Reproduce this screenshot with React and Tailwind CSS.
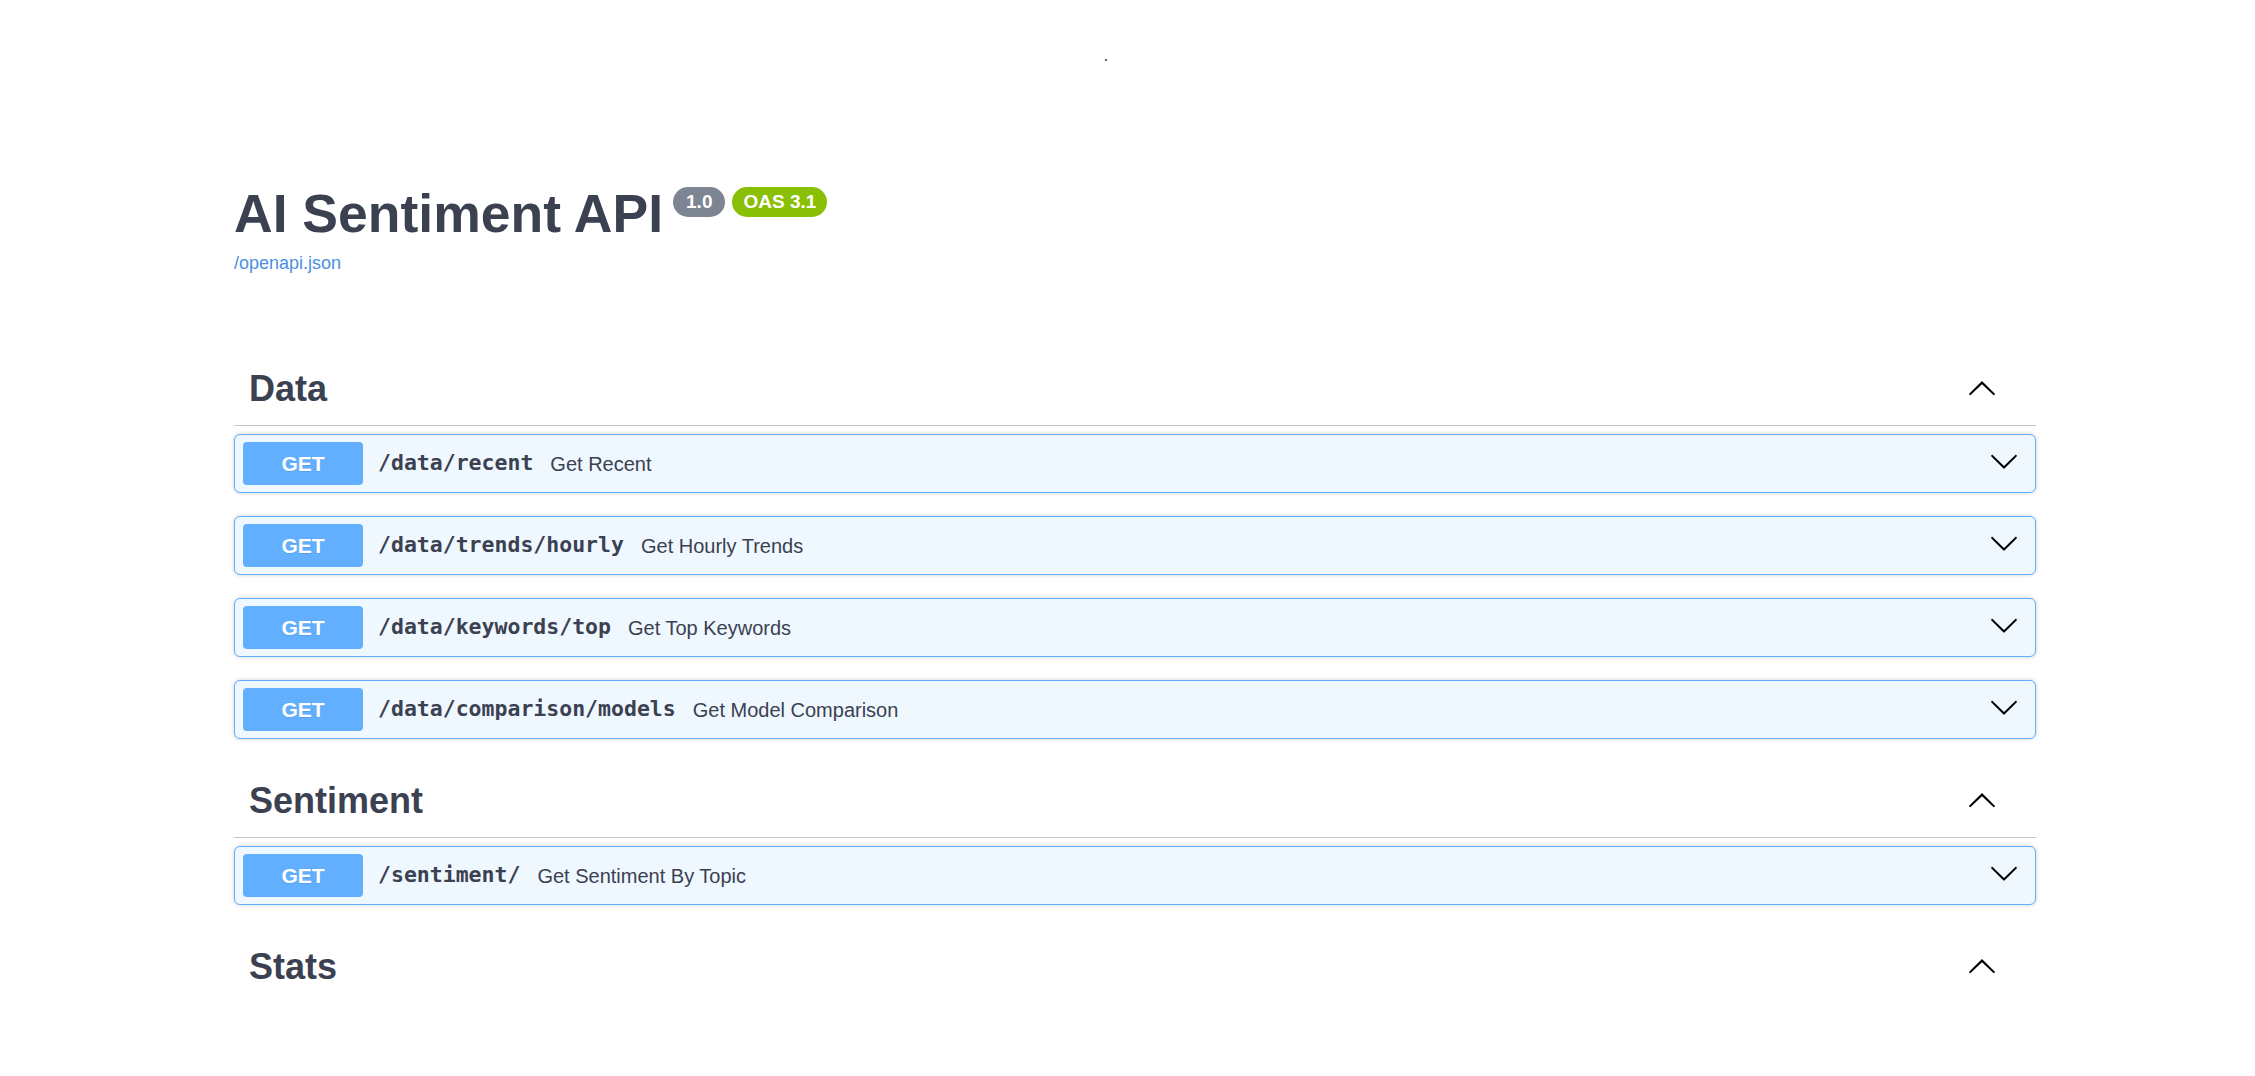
const sections = [
  {
    name: "Data",
    ops: [
      { path: "/data/recent", summary: "Get Recent" },
      { path: "/data/trends/hourly", summary: "Get Hourly Trends" },
      { path: "/data/keywords/top", summary: "Get Top Keywords" },
      { path: "/data/comparison/models", summary: "Get Model Comparison" },
    ],
  },
  {
    name: "Sentiment",
    ops: [{ path: "/sentiment/", summary: "Get Sentiment By Topic" }],
  },
  { name: "Stats", ops: [] },
];

const ARROW =
  "M17.418 6.109c.272-.268.709-.268.979 0s.271.701 0 .969l-7.908 7.83c-.27.268-.707.268-.979 0l-7.908-7.83c-.27-.268-.27-.701 0-.969.271-.268.709-.268.979 0L10 13.25l7.418-7.141z";

function Arrow({ up, className = "" }) {
  return (
    <svg
      viewBox="0 0 20 20"
      className={`w-[30px] h-[30px] shrink-0 ${up ? "rotate-180" : ""} ${className}`}
    >
      <path d={ARROW} fill="#000" />
    </svg>
  );
}

function OpRow({ op }) {
  return (
    <div className="flex items-center h-[59px] pl-[8px] pr-[7px] border border-[#61affe] bg-[#eff7ff] rounded-[6px] shadow-[0_0_4px_rgba(0,0,0,0.19)]">
      <div className="w-[120px] h-[43px] shrink-0 rounded-[4px] bg-[#61affe] flex items-center justify-center text-white font-bold text-[21px] [text-shadow:0_1px_0_rgba(0,0,0,0.1)]">
        GET
      </div>
      <span className="pl-[15px] pr-[17px] font-['DejaVu_Sans_Mono',monospace] font-bold text-[21.5px] text-[#3b4151] mb-[1px]">
        {op.path}
      </span>
      <span className="text-[20px] text-[#3b4151]">{op.summary}</span>
      <Arrow className="ml-auto mr-[9px] mb-[5px]" />
    </div>
  );
}

function TagSection({ section }) {
  const hasOps = section.ops.length > 0;
  return (
    <div>
      <div
        className={`flex items-center py-[15px] pl-[15px] pr-[39px] border-b ${
          hasOps ? "border-[#c4c6cb]" : "border-transparent"
        }`}
      >
        <h3 className="text-[36px] leading-[43px] font-bold text-[#3b4151]">
          {section.name}
        </h3>
        <Arrow up className="ml-auto" />
      </div>
      {hasOps && (
        <div className="pt-[8px] pb-[25px] flex flex-col gap-[23px]">
          {section.ops.map((op) => (
            <OpRow key={op.path} op={op} />
          ))}
        </div>
      )}
    </div>
  );
}

export default function App() {
  return (
    <div className="min-h-[1076px] bg-white font-['Liberation_Sans',Arial,sans-serif] text-[#3b4151]">
      <div className="h-[183px] pt-[59px] pl-[1105px]">
        <div className="w-[2px] h-[2px] bg-[#666]" />
      </div>

      <div className="ml-[234px] w-[1802px]">
        <div className="flex items-start">
          <h2 className="text-[53.5px] leading-[62px] font-bold text-[#3b4151]">
            AI Sentiment API
          </h2>
          <div className="flex gap-[7px] ml-[10px] mt-[4px]">
            <span className="h-[30px] px-[13px] rounded-full bg-[#7d8492] text-white font-bold text-[19px] flex items-center">
              1.0
            </span>
            <span className="h-[30px] px-[11px] rounded-full bg-[#89bf04] text-white font-bold text-[19px] flex items-center">
              OAS 3.1
            </span>
          </div>
        </div>
        <a className="block mt-[8px] leading-[21px] text-[18px] text-[#4990e2]">
          /openapi.json
        </a>

        <div className="mt-[78px]">
          {sections.map((s) => (
            <TagSection key={s.name} section={s} />
          ))}
        </div>
      </div>
    </div>
  );
}
